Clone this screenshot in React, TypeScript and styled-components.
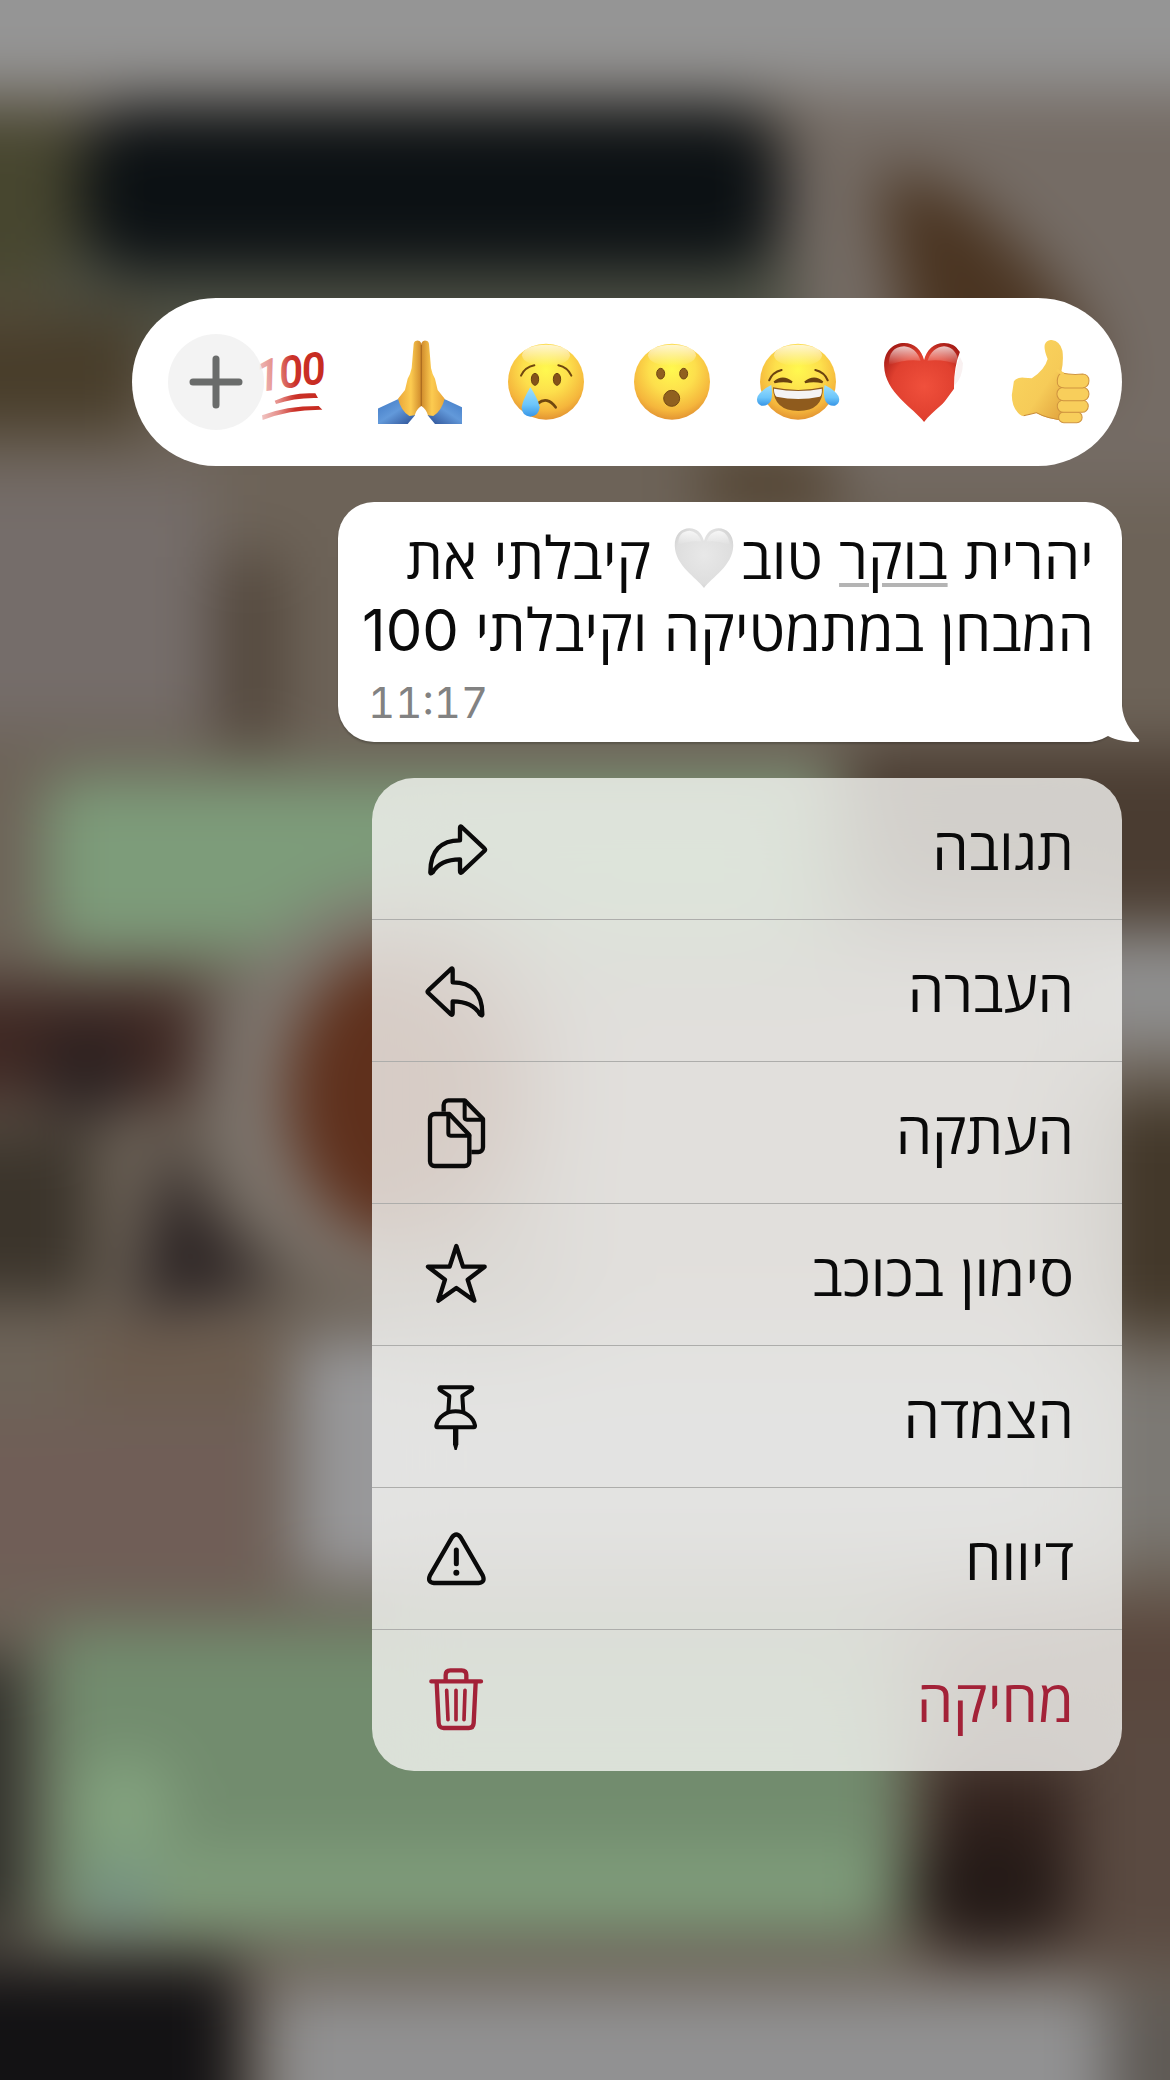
import React from "react";
import styled, { createGlobalStyle } from "styled-components";

const GlobalStyle = createGlobalStyle`
  * {
    box-sizing: border-box;
  }
  body {
    margin: 0;
    background: #6d6358;
    font-family: Inter, "Open Sans", "Liberation Sans", sans-serif;
  }
`;

const Screen = styled.main`
  position: relative;
  display: flex;
  flex-direction: column;
  align-items: flex-start;
  gap: 36px;
  min-height: 100vh;
  padding: 298px 48px 48px;
  overflow: hidden;
  color: #0a0a0a;
`;

const Wallpaper = styled.svg`
  position: absolute;
  inset: 0;
  width: 100%;
  height: 100%;
`;

const ReactionBar = styled.div`
  position: relative;
  display: flex;
  align-items: center;
  gap: 42px;
  height: 168px;
  padding: 0 30px 0 36px;
  border-radius: 84px;
  background: #fff;
`;

const Reaction = styled.button`
  width: 84px;
  height: 84px;
  padding: 0;
  border: 0;
  background: none;
  cursor: pointer;

  svg {
    display: block;
    width: 100%;
    height: 100%;
  }
`;

const MoreButton = styled.button`
  display: grid;
  place-items: center;
  width: 96px;
  height: 96px;
  margin-right: -54px;
  padding: 0;
  border: 0;
  border-radius: 50%;
  background: rgba(240, 240, 240, 0.8);
  cursor: pointer;
`;

const Bubble = styled.article`
  position: relative;
  max-width: 786px;
  padding: 20px 28px 10px 24px;
  border-radius: 36px;
  background: #fff;
  box-shadow: 0 2px 2px rgba(0, 0, 0, 0.2);
`;

const Tail = styled.svg`
  position: absolute;
  right: -18px;
  bottom: 0;
  width: 54px;
  height: 54px;
`;

const Message = styled.p`
  margin: 0;
  font-size: 58px;
  line-height: 72px;
`;

const Mention = styled.span`
  text-decoration: underline;
  text-decoration-color: #b4b4b4;
  text-decoration-thickness: 4px;
  text-underline-offset: 4px;
`;

const InlineHeart = styled.svg`
  width: 62px;
  height: 62px;
  margin: 0 6px;
  vertical-align: -10px;
`;

const Time = styled.time`
  display: block;
  margin: 8px 6px 0;
  font-size: 42px;
  line-height: 58px;
  font-variant-numeric: tabular-nums;
  text-align: left;
  color: #828282;
`;

const Menu = styled.div`
  position: relative;
  width: 100%;
  max-width: 750px;
  overflow: hidden;
  border-radius: 42px;
  background: rgba(248, 248, 246, 0.78);
  backdrop-filter: blur(40px);
`;

const MenuItem = styled.button<{ $danger?: boolean }>`
  display: flex;
  align-items: center;
  justify-content: space-between;
  width: 100%;
  height: 142px;
  padding: 0 48px 0 42px;
  border: 0;
  border-bottom: 1px solid #adadab;
  background: none;
  color: ${(p) => (p.$danger ? "#a32238" : "#0a0a0a")};
  font: inherit;
  font-size: 58px;
  line-height: 72px;
  cursor: pointer;

  &:last-child {
    height: 141px;
    border-bottom: 0;
  }
`;

const Icon = styled.svg`
  width: 84px;
  height: 84px;
  fill: none;
  stroke: currentColor;
  stroke-width: 13;
  stroke-linecap: round;
  stroke-linejoin: round;
`;

const arrowPath =
  "M138 100V62q0-6 5-2L211 124q5 4 0 8L143 196q-5 4-5-4V157C96 157 70 172 56 196q-6 6-7 0C49 130 82 100 138 100Z";

const ReplyIcon = () => (
  <Icon viewBox="0 0 252 252" aria-hidden="true">
    <path d={arrowPath} />
  </Icon>
);

const ForwardIcon = () => (
  <Icon viewBox="0 0 252 252" aria-hidden="true">
    <path d={arrowPath} transform="translate(254 0) scale(-1 1)" />
  </Icon>
);

const CopyIcon = () => (
  <Icon viewBox="0 0 252 252" aria-hidden="true">
    <path d="M106 69H62a14 14 0 0 0-14 14V211a14 14 0 0 0 14 14H152a14 14 0 0 0 14-14V132Z" />
    <path d="M103 71V127q0 7 7 7H166" strokeWidth="12" />
    <path d="M89 62V42a14 14 0 0 1 14-14H152L207 84V169a14 14 0 0 1-14 14H172" strokeLinecap="butt" />
    <path d="M152 30V79q0 7 7 7H205" strokeWidth="12" />
  </Icon>
);

const StarIcon = () => (
  <Icon viewBox="0 0 252 252" aria-hidden="true">
    <path d="M127 39 147 101H212L161 140 181 203 127 165 73 203 93 140 42 101H107Z" />
  </Icon>
);

const PinIcon = () => (
  <Icon viewBox="0 0 252 252" aria-hidden="true">
    <path d="M103 109 106 63 78 45q-4-5 0-8H173q4 3 0 8L145 63 148 109" strokeWidth="12" />
    <path d="M70 157q-4 0-3-6C73 125 97 109 125 109s52 16 58 42q1 6-4 6Z" strokeWidth="12" />
    <path d="M117 158h16v50l-5 17h-6l-5-17Z" fill="currentColor" stroke="none" />
  </Icon>
);

const ReportIcon = () => (
  <Icon viewBox="0 0 252 252" aria-hidden="true">
    <path d="M114 61q13-17 26 0L206 175q9 21-12 23H60q-21-2-12-23Z" />
    <path d="M127 99V140" strokeWidth="15" />
    <circle cx="127" cy="167" r="9" fill="currentColor" stroke="none" />
  </Icon>
);

const TrashIcon = () => (
  <Icon viewBox="0 0 252 252" aria-hidden="true">
    <path d="M52 67H201M95 66V48q0-14 14-14h34q14 0 14 14V66" />
    <path d="M68 70 74 192q1 15 15 15h75q14 0 15-15L185 70" />
    <path d="M98 94 102 182M126 94V182M153 94 150 182" strokeWidth="11" />
  </Icon>
);

const menuItems = [
  { label: "תגובה", icon: <ReplyIcon /> },
  { label: "העברה", icon: <ForwardIcon /> },
  { label: "העתקה", icon: <CopyIcon /> },
  { label: "סימון בכוכב", icon: <StarIcon /> },
  { label: "הצמדה", icon: <PinIcon /> },
  { label: "דיווח", icon: <ReportIcon /> },
  { label: "מחיקה", icon: <TrashIcon />, danger: true },
];

const heartPath =
  "M128 246C98 204 14 158 12 78C11 34 38 9 70 9C100 9 121 30 128 60C135 30 156 9 186 9C218 9 245 34 244 78C242 158 158 204 128 246Z";

// Gradients shared by all the emoji drawings
const EmojiDefs = () => (
  <Wallpaper aria-hidden="true">
    <defs>
      <radialGradient id="face" cx="0.5" cy="0.34" r="0.68">
        <stop offset="0" stopColor="#fff94f" />
        <stop offset="0.45" stopColor="#fddf4c" />
        <stop offset="0.8" stopColor="#f5b63c" />
        <stop offset="1" stopColor="#e08f31" />
      </radialGradient>
      <linearGradient id="shine" x1="0" y1="0" x2="0" y2="1">
        <stop offset="0" stopColor="#fff" stopOpacity="0.75" />
        <stop offset="1" stopColor="#fff" stopOpacity="0" />
      </linearGradient>
      <linearGradient id="tear" x1="0" y1="0" x2="0" y2="1">
        <stop offset="0" stopColor="#9fe0fd" />
        <stop offset="0.6" stopColor="#6cc5fa" />
        <stop offset="1" stopColor="#3795e6" />
      </linearGradient>
      <radialGradient id="red" cx="0.5" cy="0.55" r="0.62">
        <stop offset="0" stopColor="#f0503c" />
        <stop offset="0.65" stopColor="#e0402f" />
        <stop offset="1" stopColor="#a81d17" />
      </radialGradient>
      <radialGradient id="white" cx="0.5" cy="0.45" r="0.6">
        <stop offset="0" stopColor="#e8e8e8" />
        <stop offset="0.8" stopColor="#dedede" />
        <stop offset="1" stopColor="#cfcfcf" />
      </radialGradient>
      <linearGradient id="skin" x1="0" y1="0" x2="1" y2="1">
        <stop offset="0" stopColor="#fbd65f" />
        <stop offset="0.6" stopColor="#f6cb58" />
        <stop offset="1" stopColor="#dfa03c" />
      </linearGradient>
      <linearGradient id="palm" x1="0" y1="0" x2="1" y2="0">
        <stop offset="0" stopColor="#e9a63a" />
        <stop offset="0.55" stopColor="#fccb50" />
        <stop offset="1" stopColor="#d08b2c" />
      </linearGradient>
      <linearGradient id="sleeve" x1="0" y1="0" x2="1" y2="1">
        <stop offset="0" stopColor="#3f78c4" />
        <stop offset="0.5" stopColor="#6299da" />
        <stop offset="1" stopColor="#2c4f94" />
      </linearGradient>
      <linearGradient id="ink" x1="0" y1="0" x2="1" y2="0">
        <stop offset="0" stopColor="#f0c4c2" />
        <stop offset="0.28" stopColor="#e58d88" />
        <stop offset="0.55" stopColor="#cb3128" />
        <stop offset="1" stopColor="#c62a20" />
      </linearGradient>
    </defs>
  </Wallpaper>
);

const Face = () => (
  <>
    <circle cx="126" cy="125" r="114" fill="url(#face)" />
    <ellipse cx="126" cy="46" rx="72" ry="32" fill="url(#shine)" />
  </>
);

const ThumbsUp = () => (
  <svg viewBox="0 0 252 252">
    <g transform="translate(-3 0) scale(1.033 1)">
      <path
        d="M20 124q8-13 30-11l22 2q38-26 46-58q-12-30-8-44q6-14 20-13q24 3 31 32q4 30-3 62q10 5 12 20V240q-50 0-86-22L44 228Q14 210 14 165Z"
        fill="url(#skin)"
      />
      <path d="M48 227Q68 222 85 218Q120 238 170 241" fill="none" stroke="#c98a36" strokeWidth="3" />
      <g fill="#f8ce5b" stroke="#cf9440" strokeWidth="3">
        <rect x="150" y="216" width="68" height="32" rx="15" />
        <rect x="146" y="180" width="90" height="37" rx="18" />
        <rect x="145" y="142" width="93" height="40" rx="19" />
        <path d="M158 99Q190 106 220 102q18 2 18 20t-18 22H168q-24 0-22-22q1-18 12-23Z" />
      </g>
      <path d="M145 90q8 8 20 12" stroke="#f8ce5b" strokeWidth="8" fill="none" />
    </g>
  </svg>
);

const RedHeart = () => (
  <svg viewBox="0 0 252 252">
    <clipPath id="heartClip">
      <path d="M0 0H205L232 36Q214 82 215 146L140 252H0Z" />
    </clipPath>
    <g transform="translate(-6 0) scale(1.033 1)">
      <path d="M232 50Q216 90 217 136Q240 112 241 70Z" fill="#f9f1f1" />
      <g clipPath="url(#heartClip)">
        <path d={heartPath} fill="url(#red)" />
        <path d="M26 75Q24 22 70 19Q104 22 118 62Q74 56 26 75Z" fill="url(#shine)" />
        <path d="M138 62Q152 22 186 19Q224 22 230 75Q184 56 138 62Z" fill="url(#shine)" />
      </g>
    </g>
  </svg>
);

const Joy = () => (
  <svg viewBox="0 0 252 252">
    <Face />
    <g transform="translate(-9 0) scale(1.033 1)">
      <g fill="none" stroke="#6b4310" strokeWidth="6" strokeLinecap="round">
        <path d="M47 121Q56 97 83 90M217 121Q208 97 181 90" />
        <path
          d="M62 127Q86 104 113 127Q88 120 62 127ZM151 127Q178 104 202 127Q176 120 151 127Z"
          fill="#6b4310"
        />
      </g>
      <path d="M58 142Q132 158 203 142Q204 213 132 213Q60 213 58 142Z" fill="#8f5b1d" />
      <path d="M61 146Q132 160 200 146Q201 165 194 170Q132 184 68 170Q60 162 61 146Z" fill="#f4f4f4" />
      <path d="M53 135Q58 165 52 182Q42 200 24 197Q6 188 14 168Q24 150 53 135Z" fill="url(#tear)" />
      <path d="M208 135Q203 165 210 182Q220 200 238 197Q256 188 248 168Q238 150 208 135Z" fill="url(#tear)" />
    </g>
  </svg>
);

const Surprised = () => (
  <svg viewBox="0 0 252 252">
    <Face />
    <g fill="#90601f" stroke="#724713" strokeWidth="3">
      <ellipse cx="92" cy="101" rx="12" ry="16" />
      <ellipse cx="161" cy="101" rx="12" ry="16" />
      <ellipse cx="125" cy="175" rx="24" ry="24" />
    </g>
  </svg>
);

const Crying = () => (
  <svg viewBox="0 0 252 252">
    <Face />
    <g transform="translate(-6 0)">
      <g fill="#84521a" stroke="#6b4310" strokeWidth="3">
        <ellipse cx="99" cy="118" rx="11" ry="18" />
        <ellipse cx="165" cy="118" rx="11" ry="18" />
      </g>
      <g fill="none" stroke="#70470f" strokeWidth="6" strokeLinecap="round">
        <path d="M57 107Q68 82 97 76M208 107Q197 82 169 76" />
        <path d="M108 190Q136 168 161 202" strokeWidth="8" />
      </g>
      <path d="M85 141Q62 180 59 202Q60 229 85 230Q110 229 113 202Q110 180 85 141Z" fill="url(#tear)" />
    </g>
  </svg>
);

const praySide = (
  <>
    <path d="M-6 207 58 177 108 226 86 252H-6Z" fill="url(#sleeve)" />
    <path
      d="M127 198V10Q123 0 113 2Q105 3 104 12L98 84Q94 104 86 116L78 150 57 176Q66 212 91 228L107 226Q112 208 127 198Z"
      fill="url(#palm)"
    />
    <path d="M127 198V14" stroke="#a9691e" strokeWidth="3" />
  </>
);

const Pray = () => (
  <svg viewBox="0 0 252 252">
    <g transform="translate(3 0)">{praySide}</g>
    <g transform="translate(257 0) scale(-1 1)">{praySide}</g>
  </svg>
);

const HundredText = styled.text`
  font-family: Roboto, Lato, sans-serif;
  font-size: 126px;
  font-style: italic;
  stroke: url(#ink);
  stroke-width: 5px;
`;

const Hundred = () => (
  <svg viewBox="0 0 252 252">
    <HundredText x="14" y="138" transform="rotate(-8 130 100)" fill="url(#ink)" direction="ltr">
      100
    </HundredText>
    <path
      d="M68 182Q120 156 190 160L198 174Q130 172 72 192ZM30 226Q100 198 200 198L211 209Q112 208 32 240Z"
      fill="url(#ink)"
    />
  </svg>
);

const reactions = [
  { name: "אגודל למעלה", art: <ThumbsUp /> },
  { name: "לב", art: <RedHeart /> },
  { name: "צוחק", art: <Joy /> },
  { name: "מופתע", art: <Surprised /> },
  { name: "עצוב", art: <Crying /> },
  { name: "תודה", art: <Pray /> },
  { name: "מאה", art: <Hundred /> },
];

// The blurred chat that lies behind the menu
const Backdrop = () => (
  <Wallpaper viewBox="0 0 882 1568" preserveAspectRatio="none" aria-hidden="true">
    <defs>
      <filter
        id="soft"
        filterUnits="userSpaceOnUse"
        x="-100"
        y="-100"
        width="1082"
        height="1768"
        colorInterpolationFilters="sRGB"
      >
        <feGaussianBlur stdDeviation="23" />
      </filter>
    </defs>
    <rect width="882" height="1568" fill="#6d6358" />
    <g filter="url(#soft)">
      <rect x="-90" y="-90" width="1060" height="1760" fill="#6d6358" />
      <rect x="-90" y="-90" width="1060" height="158" fill="#959595" />
      <rect x="600" y="68" width="380" height="300" fill="#756c65" />
      <path d="M660 130Q720 130 760 180Q810 220 830 290H690Z" fill="#4a3421" />
      <rect x="-90" y="85" width="150" height="140" fill="#47462f" />
      <rect x="40" y="190" width="560" height="80" fill="#4e5145" />
      <rect x="60" y="82" width="530" height="122" rx="40" fill="#0c1114" />
      <rect x="-90" y="236" width="200" height="90" fill="#483d2a" />
      <rect x="-90" y="358" width="250" height="190" fill="#756d6a" />
      <rect x="165" y="420" width="46" height="140" fill="#4f4338" />
      <rect x="530" y="345" width="100" height="40" fill="#4d3d2a" />
      <rect x="640" y="565" width="330" height="130" fill="#4a3c31" />
      <rect x="34" y="586" width="596" height="132" rx="20" fill="#7d9c7a" />
      <rect x="640" y="706" width="330" height="84" fill="#8f8f8f" />
      <rect x="-90" y="742" width="240" height="90" fill="#3f2823" />
      <circle cx="66" cy="808" r="36" fill="#2a2020" />
      <rect x="-90" y="850" width="160" height="130" fill="#3b342b" />
      <circle cx="310" cy="820" r="150" fill="#7f7770" />
      <ellipse cx="308" cy="825" rx="92" ry="112" fill="#5f301c" />
      <path d="M130 850Q150 930 220 970L100 990Z" fill="#2b2323" />
      <rect x="60" y="1000" width="150" height="55" fill="#6c5b4d" />
      <rect x="-90" y="1070" width="290" height="130" fill="#705e57" />
      <rect x="820" y="830" width="160" height="170" fill="#43382a" />
      <rect x="420" y="730" width="400" height="280" fill="#8f8580" />
      <rect x="225" y="1010" width="600" height="180" fill="#98989a" />
      <rect x="820" y="1030" width="160" height="140" fill="#7c7974" />
      <rect x="700" y="1210" width="280" height="80" fill="#5a473d" />
      <rect x="-90" y="1250" width="110" height="210" fill="#2f302a" />
      <rect x="690" y="1290" width="290" height="190" fill="#5a4a41" />
      <rect x="700" y="1330" width="110" height="130" fill="#33231e" />
      <ellipse cx="745" cy="1425" rx="60" ry="44" fill="#241a17" />
      <rect x="34" y="1226" width="644" height="232" rx="16" fill="#728c6e" />
      <rect x="60" y="1394" width="600" height="56" fill="#7f9d7b" />
      <circle cx="94" cy="1360" r="36" fill="#84a480" />
      <circle cx="90" cy="1430" r="22" fill="#72908a" />
      <rect x="-90" y="1480" width="270" height="190" fill="#131214" />
      <rect x="205" y="1500" width="630" height="160" fill="#919192" />
      <rect x="835" y="1500" width="140" height="160" fill="#5f5a55" />
    </g>
  </Wallpaper>
);

export default function App() {
  return (
    <Screen dir="rtl" lang="he">
      <GlobalStyle />
      <EmojiDefs />
      <Backdrop />

      <ReactionBar>
        {reactions.map((r) => (
          <Reaction key={r.name} type="button" aria-label={r.name}>
            {r.art}
          </Reaction>
        ))}
        <MoreButton type="button" aria-label="עוד">
          <svg width="54" height="54" viewBox="0 0 54 54" stroke="#6a6c6b" strokeWidth="7" strokeLinecap="round">
            <path d="M4 27H50M27 4V50" />
          </svg>
        </MoreButton>
      </ReactionBar>

      <Bubble>
        <Tail viewBox="0 0 54 54">
          <path d="M36 0V18C37 32 44 42 53 52Q54 54 51 54C40 54 30 52 22 48Q12 54 0 54V0Z" fill="#fff" />
        </Tail>
        <Message>
          יהרית <Mention>בוקר</Mention> טוב
          <InlineHeart viewBox="8 4 240 246" role="img" aria-label="לב לבן">
            <path d={heartPath} fill="url(#white)" />
            <path d="M26 75Q24 22 70 19Q104 22 118 62Q74 56 26 75Z" fill="url(#shine)" />
            <path d="M138 62Q152 22 186 19Q224 22 230 75Q184 56 138 62Z" fill="url(#shine)" />
          </InlineHeart>{" "}
          קיבלתי את
          <br />
          המבחן במתמטיקה וקיבלתי 100
        </Message>
        <Time>11:17</Time>
      </Bubble>

      <Menu>
        {menuItems.map((item) => (
          <MenuItem key={item.label} type="button" $danger={item.danger}>
            {item.label}
            {item.icon}
          </MenuItem>
        ))}
      </Menu>
    </Screen>
  );
}
